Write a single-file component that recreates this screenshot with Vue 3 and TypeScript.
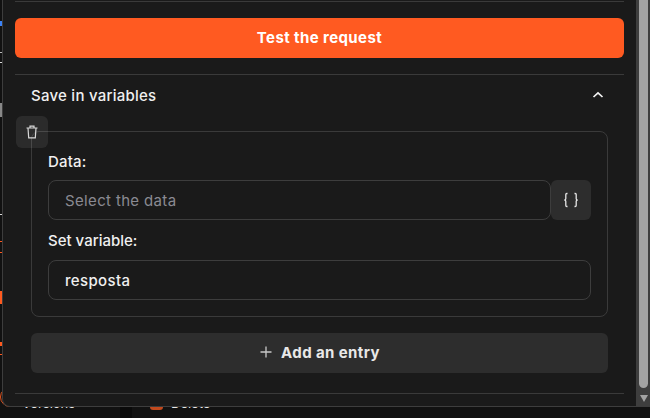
<script setup lang="ts">
import { ref } from 'vue'

const selected = ref('')
const variable = ref('resposta')

// bits of the sidebar icons that stick out left of the panel
const marks = [
  { gap: 21, height: 5, color: '#3b82f6' },
  { gap: 26, height: 1, color: '#bbbbbb' },
  { gap: 9, height: 1, color: '#dddddd' },
  { gap: 40, height: 14, color: '#888888' },
  { gap: 97, height: 1, color: '#dddddd' },
  { gap: 26, height: 1, color: '#ff5a1f' },
  { gap: 10, height: 1, color: '#ff5a1f' },
  { gap: 38, height: 13, color: '#ff5a1f' },
  { gap: 38, height: 4, color: '#ff5a1f' },
  { gap: 8, height: 1, color: '#ff5a1f' }
]
</script>

<template>
  <div class="screen">
    <div class="main">
      <div class="sliver">
        <i
          v-for="(mark, i) in marks"
          :key="i"
          :style="{ marginTop: mark.gap + 'px', height: mark.height + 'px', background: mark.color }"
        ></i>
      </div>
      <div class="arc"></div>
      <div class="panel">
        <div class="content">
          <div class="top-line"></div>
          <button class="test-btn">Test the request</button>
          <div class="section-head">
            <span>Save in variables</span>
            <svg width="14" height="14" viewBox="0 0 14 14" fill="none" stroke="#f2f2f2" stroke-width="1.7">
              <path d="M2.5 9 7 4.8 11.5 9" />
            </svg>
          </div>
          <div class="entry-wrap">
            <div class="entry">
              <button class="trash" aria-label="Delete">
                <svg width="16" height="16" viewBox="0 0 16 16" fill="none" stroke="#d8d8d8" stroke-width="1.2">
                  <path d="M2.5 4h11M6 4V2.2h4V4M4 4l.7 9.8h6.6L12 4" />
                </svg>
              </button>
              <label class="field-label">Data:</label>
              <div class="input-row">
                <input v-model="selected" class="field joined" placeholder="Select the data" />
                <button class="braces" aria-label="Insert variable">
                  <svg width="16" height="16" viewBox="0 0 16 16" fill="none" stroke="#e6e6e6" stroke-width="1.3">
                    <path d="M4.5 1.5H3.8Q2.8 1.5 2.8 2.5V6.8Q2.8 8 1.3 8 2.8 8 2.8 9.2V13.5Q2.8 14.5 3.8 14.5H4.5" />
                    <path d="M11.5 1.5H12.2Q13.2 1.5 13.2 2.5V6.8Q13.2 8 14.7 8 13.2 8 13.2 9.2V13.5Q13.2 14.5 12.2 14.5H11.5" />
                  </svg>
                </button>
              </div>
              <label class="field-label second">Set variable:</label>
              <input v-model="variable" class="field" />
            </div>
            <button class="add-btn">
              <svg width="14" height="14" viewBox="0 0 14 14" fill="none" stroke="#c8c8c8" stroke-width="1.3">
                <path d="M7 1.5v11M1.5 7h11" />
              </svg>
              Add an entry
            </button>
          </div>
        </div>
        <div class="scrollbar">
          <div class="thumb"></div>
          <div class="arrow"></div>
        </div>
      </div>
    </div>
    <div class="under">
      <div class="under-item first"><span>Versions</span></div>
      <div class="gutter"></div>
      <div class="under-item"><b class="dot"></b><span>Delete</span></div>
    </div>
  </div>
</template>

<style>
html,
body {
  margin: 0;
  background: #111111;
  overflow: hidden;
}
</style>

<style scoped>
.screen {
  width: 650px;
  height: 418px;
  display: flex;
  flex-direction: column;
  overflow: hidden;
  background: #111111;
  font-family: Inter, 'Noto Sans', sans-serif;
  color: #f0f0f0;
}

.main {
  position: relative;
  display: flex;
  height: 407px;
  flex: none;
}

.sliver {
  width: 2px;
  flex: none;
  display: flex;
  flex-direction: column;
}

.sliver i {
  display: block;
  flex: none;
}

/* icon behind the panel, only its edge shows round the corner */
.arc {
  position: absolute;
  left: 0;
  top: 387px;
  width: 20px;
  height: 20px;
  box-sizing: border-box;
  border: 1.5px solid #e8551f;
  border-radius: 50%;
}

.panel {
  position: relative;
  flex: 1;
  display: flex;
  background: #1a1a1a;
  border-left: 1px solid #3d3d3d;
  border-bottom: 1px solid #3d3d3d;
  border-bottom-left-radius: 8px;
  min-width: 0;
}

.content {
  flex: 1;
  padding: 1px 12px 0;
  min-width: 0;
}

.top-line {
  height: 1px;
  background: #3a3a3a;
}

.test-btn {
  display: block;
  width: 100%;
  height: 40px;
  margin-top: 16px;
  padding: 0 0 2px;
  border: 0;
  border-radius: 6px;
  background: #ff5a21;
  color: #ffffff;
  font: 700 15px Inter, sans-serif;
  letter-spacing: 0.4px;
}

.section-head {
  margin-top: 16px;
  border-top: 1px solid #3a3a3a;
  padding: 0 19px 2px 16px;
  height: 40px;
  display: flex;
  align-items: center;
  justify-content: space-between;
  font-size: 15px;
  font-weight: 500;
  letter-spacing: 0.25px;
}

.entry-wrap {
  padding: 14px 16px 20px;
  border-bottom: 1px solid #3a3a3a;
}

.entry {
  position: relative;
  height: 186px;
  box-sizing: border-box;
  padding: 16px 16px 0;
  border: 1px solid #3a3a3a;
  border-radius: 8px;
}

.trash {
  position: absolute;
  left: -16px;
  top: -16px;
  width: 32px;
  height: 32px;
  padding: 0;
  display: flex;
  align-items: center;
  justify-content: center;
  border: 0;
  border-radius: 6px;
  background: rgba(255, 255, 255, 0.08);
}

.field-label {
  display: block;
  height: 32px;
  line-height: 27px;
  font-size: 15px;
  font-weight: 500;
  letter-spacing: 0.2px;
}

.field-label.second {
  height: 40px;
  line-height: 41px;
  letter-spacing: 0;
}

.input-row {
  display: flex;
}

.field {
  display: block;
  width: 100%;
  height: 40px;
  box-sizing: border-box;
  padding: 0 16px;
  border: 1px solid #3d3d3d;
  border-radius: 8px;
  background: transparent;
  color: #f0f0f0;
  font: 500 15px Inter, sans-serif;
  letter-spacing: 0.35px;
  outline: none;
}

.field.joined {
  flex: 1;
  min-width: 0;
}

.field::placeholder {
  color: #8a8a92;
  font-weight: 400;
  opacity: 1;
}

.braces {
  flex: none;
  width: 40px;
  height: 40px;
  padding: 0;
  display: flex;
  align-items: center;
  justify-content: center;
  border: 0;
  border-radius: 6px;
  background: #2d2d2d;
}

.add-btn {
  width: 100%;
  height: 40px;
  margin-top: 16px;
  padding: 0 0 2px;
  display: flex;
  align-items: center;
  justify-content: center;
  gap: 8px;
  border: 0;
  border-radius: 6px;
  background: #2d2d2d;
  color: #e8e8e8;
  font: 700 15px Inter, sans-serif;
  letter-spacing: 0.4px;
}

.scrollbar {
  width: 14px;
  flex: none;
  background: #3e3e3e;
  padding: 0 2px 0 3px;
  box-sizing: border-box;
  display: flex;
  flex-direction: column;
  align-items: center;
}

.thumb {
  width: 9px;
  height: 388px;
  flex: none;
  background: #a3a3a3;
  border-radius: 0 0 5px 5px;
}

.arrow {
  margin-top: 7px;
  flex: none;
  border-left: 4.5px solid transparent;
  border-right: 4.5px solid transparent;
  border-top: 7px solid #a3a3a3;
}

.under {
  flex: 1;
  display: flex;
  overflow: hidden;
  font-size: 13px;
  color: #e8e8e8;
}

.under-item {
  display: flex;
  gap: 8px;
  margin-top: -12px;
  height: 20px;
}

.under-item.first {
  width: 120px;
  padding-left: 22px;
  box-sizing: border-box;
}

.gutter {
  width: 12px;
  height: 11px;
  flex: none;
  background: #0a0a0a;
}

.under-item .dot {
  display: block;
  width: 13px;
  height: 15px;
  margin-left: 18px;
  border-radius: 0 0 3px 3px;
  background: #c2491d;
}
</style>
